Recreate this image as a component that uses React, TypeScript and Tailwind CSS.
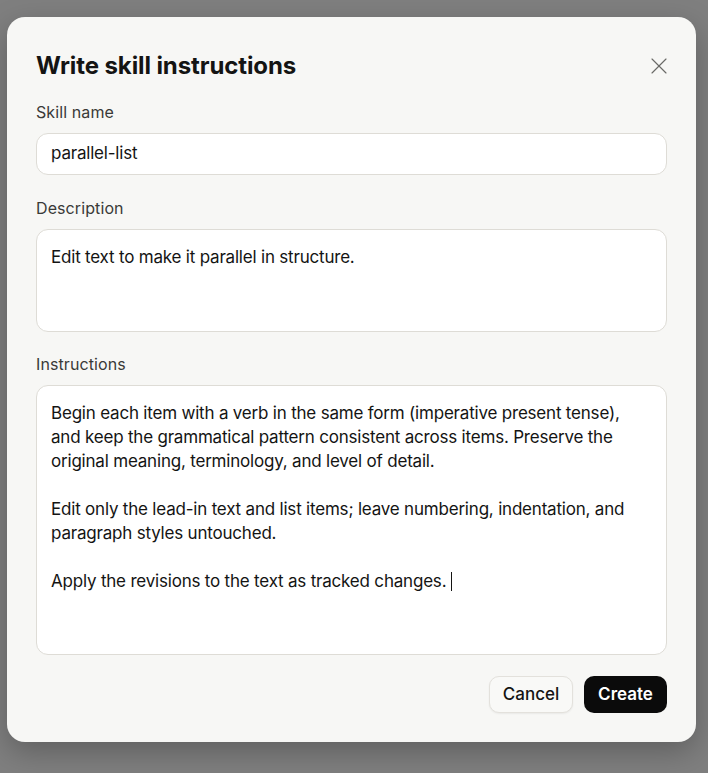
import { X } from "lucide-react";

function Field({ label, children, className = "" }: { label: string; children: React.ReactNode; className?: string }) {
  return (
    <div className={`flex flex-col gap-[9px] ${className}`}>
      <label className="text-[16px] leading-[24px] text-[#3a3a38] tracking-[0.1px]">{label}</label>
      {children}
    </div>
  );
}

export default function App() {
  return (
    <main
      className="min-h-screen bg-[#7f7f7f] pl-[7px] pt-[17px] pb-[31px]"
      style={{ fontFamily: "Inter, 'Noto Sans', sans-serif" }}
    >
      <div className="w-[689px] rounded-[18px] bg-[#f7f7f5] px-[29px] pt-[33px] pb-[29px] shadow-[0_10px_30px_rgba(0,0,0,0.25)]">
        <div className="flex items-center justify-between">
          <h1 className="text-[24px] leading-[32px] font-bold tracking-[-0.1px] text-[#141413]">
            Write skill instructions
          </h1>
          <button className="-mr-[6px] text-[#6a6a67]">
            <X size={28} strokeWidth={1} />
          </button>
        </div>

        <div className="mt-[18px] flex flex-col tracking-[-0.2px]">
          <Field label="Skill name">
            <div className="flex h-[42px] items-center rounded-[12px] border border-[#dedcd6] bg-white px-[14px] text-[17px] text-[#141413]">
              parallel-list
            </div>
          </Field>

          <Field label="Description" className="mt-[21px]">
            <div className="h-[103px] rounded-[12px] border border-[#dedcd6] bg-white px-[14px] pt-[15px] text-[17px] leading-[24px] text-[#141413]">
              Edit text to make it parallel in structure.
            </div>
          </Field>

          <Field label="Instructions" className="mt-[20px]">
            <div className="h-[270px] rounded-[12px] border border-[#dedcd6] bg-white px-[14px] pt-[15px] text-[17px] leading-[24px] text-[#141413]">
              <p>
                Begin each item with a verb in the same form (imperative present tense), and keep the
                grammatical pattern consistent across items. Preserve the original meaning,
                terminology, and level of detail.
              </p>
              <p className="mt-[24px]">
                Edit only the lead-in text and list items; leave numbering, indentation, and
                paragraph styles untouched.
              </p>
              <p className="mt-[24px]">
                Apply the revisions to the text as tracked changes.{" "}
                <span className="inline-block h-[19px] w-0 border-l border-[#141413] align-[-4px]" />
              </p>
            </div>
          </Field>
        </div>

        <div className="mt-[21px] flex justify-end gap-[11px]">
          <button className="h-[37px] w-[84px] rounded-[10px] border border-[#e3e1dc] bg-[#f9f9f7] text-[17px] font-medium text-[#141413] shadow-[0_1px_2px_rgba(0,0,0,0.06)]">
            Cancel
          </button>
          <button className="h-[37px] w-[83px] rounded-[10px] bg-[#0b0b0b] text-[17px] font-semibold text-white">
            Create
          </button>
        </div>
      </div>
    </main>
  );
}
